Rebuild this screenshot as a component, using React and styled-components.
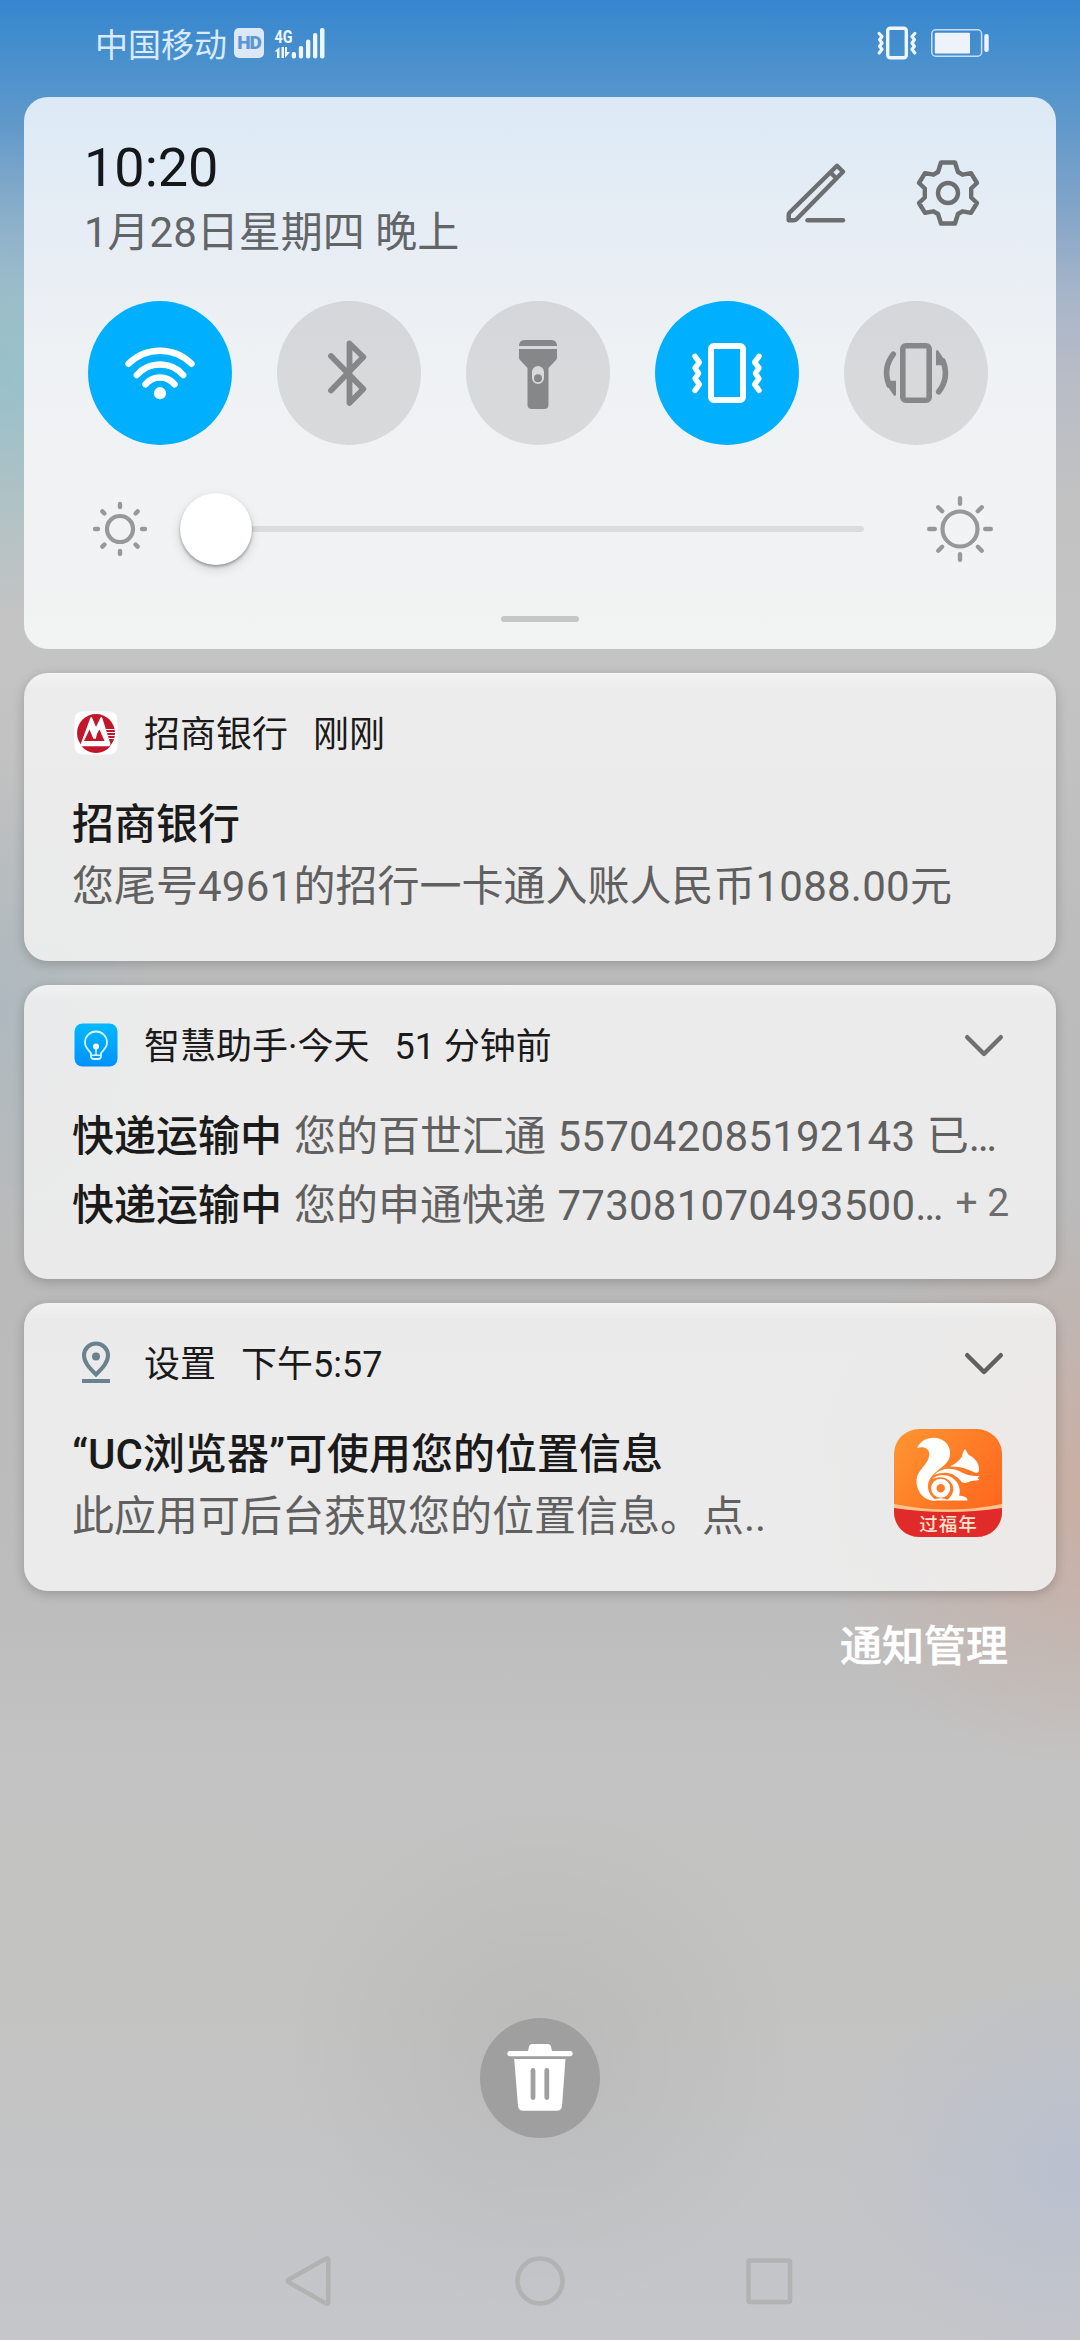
import React from 'react'
import styled, { createGlobalStyle } from 'styled-components'

const toggles = [
  { id: 'wifi', active: true },
  { id: 'bluetooth', active: false },
  { id: 'torch', active: false },
  { id: 'vibrate', active: true },
  { id: 'rotate', active: false },
]

const parcels = [
  { title: '快递运输中', company: '您的百世汇通', number: '557042085192143', tail: ' 已…' },
  { title: '快递运输中', company: '您的申通快递', number: '773081070493500', tail: '…', more: '+ 2' },
]

const rays = [0, 45, 90, 135, 180, 225, 270, 315]

const zigzag = 'M40 55.3L44.4 61.3L40 67L43.6 72.3L40 77.7L44.4 83.3L40 89.3'

const ToggleIcon = ({ id }) => {
  switch (id) {
    case 'wifi':
      return (
        <svg viewBox='0 0 144 144' fill='none' stroke='#fff'>
          <g strokeWidth='6.4' strokeLinecap='round'>
            <path d='M40.5 62.8A44.5 44.5 0 0 1 103.5 62.8' />
            <path d='M48.8 74A31 31 0 0 1 95.2 74' />
            <path d='M57.4 83.4A19 19 0 0 1 86.6 83.4' />
          </g>
          <circle cx='72' cy='92.2' r='6.1' fill='#fff' stroke='none' />
        </svg>
      )
    case 'bluetooth':
      return (
        <svg viewBox='0 0 144 144' fill='none' stroke='#868788'>
          <path
            d='M54 55L86.3 88L72.5 102V42.5L86.3 56L54 89.5'
            strokeWidth='5.8'
            strokeLinecap='round'
            strokeLinejoin='round'
          />
        </svg>
      )
    case 'torch':
      return (
        <svg viewBox='0 0 144 144' fill='#868788'>
          <path d='M53 45C53 41 55.500 39 59 39H85C88.500 39 91 41 91 45Z' />
          <path
            fillRule='evenodd'
            d='M53 48H91V56.500C91 58 90.500 58.500 89.500 59.500L82.500 67V103.500Q82.500 108 78 108H66Q61.500 108 61.500 103.500V67L54.500 59.500C53.500 58.500 53 58 53 56.500ZM72 65A6 6 0 0 0 66 71V77A6 6 0 0 0 78 77V71A6 6 0 0 0 72 65Z'
          />
          <circle cx='72' cy='77.2' r='4' />
        </svg>
      )
    case 'vibrate':
      return (
        <svg viewBox='0 0 144 144' fill='none' stroke='#fff'>
          <rect x='56' y='45' width='32' height='54' rx='3' strokeWidth='6' />
          <g strokeWidth='5.4' strokeLinecap='round' strokeLinejoin='round'>
            <path d={zigzag} />
            <path d={zigzag} transform='translate(144 0) scale(-1 1)' />
          </g>
        </svg>
      )
    default:
      return (
        <svg viewBox='0 0 144 144' fill='none' stroke='#868788'>
          <rect x='58.8' y='44.8' width='26.4' height='54.4' rx='3' strokeWidth='5.6' />
          {[0, 180].map((deg) => (
            <g key={deg} transform={`rotate(${deg} 72 72)`}>
              <path d='M49.3 53.300Q38.500 67 45 84' strokeWidth='5.600' strokeLinecap='round' />
              <path
                d='M45 79.800H52V93.500Q51.500 96 49.500 94Q44.500 88 42.500 81Z'
                fill='#868788'
                stroke='none'
              />
            </g>
          ))}
        </svg>
      )
  }
}

const Sun = ({ size, r, from, to }) => (
  <svg width={size} height={size} viewBox='-36 -36 72 72' fill='none' stroke='#979899'>
    <circle r={r} strokeWidth='4.2' />
    {rays.map((deg) => (
      <path
        key={deg}
        d={`M0 ${-from}V${-to}`}
        transform={`rotate(${deg})`}
        strokeWidth='4.4'
        strokeLinecap='round'
      />
    ))}
  </svg>
)

const EditIcon = () => (
  <svg width='60' height='60' viewBox='0 0 60 60' fill='none' stroke='#6c6f71' strokeWidth='4.4'>
    <path
      d='M51 2.800L57 8.800L10.500 56.200Q9.500 57.200 8 57.200H2.700V52Q2.700 50.500 3.700 49.500ZM44.500 9.500L50.500 15.500'
      strokeLinejoin='round'
    />
    <path d='M21.500 57.200H57' strokeLinecap='round' />
  </svg>
)

const GearIcon = () => (
  <svg width='68' height='68' viewBox='-34 -34 68 68' fill='none' stroke='#6c6f71' strokeWidth='4.400'>
    <path
      d='M-7 -30.500H7L10 -21L14.500 -18.300L23 -19.800L29 -10L23.200 -4.500V4.500L29 10L23 19.800L14.500 18.300L10 21L7 30.500H-7L-10 21L-14.500 18.300L-23 19.800L-29 10L-23.200 4.500V-4.500L-29 -10L-23 -19.800L-14.500 -18.300L-10 -21Z'
      strokeLinejoin='round'
    />
    <circle r='10' />
  </svg>
)

const SignalIcon = () => (
  <svg width='52' height='44' viewBox='0 -6 52 44' fill='#eef6ff'>
    <text
      x='0.500'
      y='15.500'
      fontFamily='Roboto, sans-serif'
      fontSize='19'
      fontWeight='700'
      textLength='18'
      lengthAdjust='spacingAndGlyphs'
    >
      4G
    </text>
    <path d='M5.500 20V31H3V24.500H0.500ZM7.500 20H10V31H7.500ZM11 20H13V25H16L11 31Z' />
    <rect x='17.700' y='25' width='4.300' height='6.500' rx='2' />
    <rect x='24.800' y='19' width='4.300' height='12.500' rx='2' />
    <rect x='32' y='12.500' width='4.300' height='19' rx='2' />
    <rect x='39' y='6' width='4.300' height='25.500' rx='2' />
    <rect x='46' y='1' width='4.500' height='30.500' rx='2' />
  </svg>
)

const StatusVibrate = () => (
  <svg width='40' height='34' viewBox='0 0 40 34' fill='none' stroke='#eef6ff'>
    <rect x='10.700' y='2.200' width='18.600' height='29.600' rx='2.500' strokeWidth='3.400' />
    <g strokeWidth='3.200' strokeLinecap='round' strokeLinejoin='round'>
      <path d='M2.200 7.500L5 10.500L2.600 13.800L5 17L2.600 20.200L5 23.300L2.200 27' />
      <path d='M37.800 7.500L35 10.500L37.400 13.800L35 17L37.400 20.200L35 23.300L37.800 27' />
    </g>
  </svg>
)

const BatteryIcon = () => (
  <svg width='58' height='28' viewBox='0 0 58 28' fill='#eef3fb'>
    <rect x='0.800' y='0.800' width='49.800' height='26.400' rx='4' fill='none' stroke='#c4e0fa' strokeWidth='1.500' />
    <rect x='3.800' y='3.800' width='35.200' height='20.600' rx='1' />
    <rect x='53.300' y='5' width='4.400' height='18' rx='2' />
  </svg>
)

const BankIcon = () => (
  <svg width='44' height='44' viewBox='0 0 44 44'>
    <rect x='0.500' y='0.500' width='43' height='43' rx='8' fill='#fff' />
    <circle cx='22' cy='22' r='19' fill='#c1172d' />
    <path d='M6 35L16.300 7Q17.200 5 18.200 7L22 16L26.300 7Q27.400 5 28.300 7L36.500 33L35 36H8Z' fill='#fff' />
    <path d='M17.500 10.500L20.800 19L17 26ZM27.400 10.500L30 19L26 26Z' fill='#fff' />
    <path d='M10 30L15.500 18.500L19.500 28L25.500 18.500L30.500 30Z' fill='#c1172d' />
    <path d='M18.200 9.800L21.800 19.500L20 23.500L21 27.500L23 19.500L27 9.800' fill='none' stroke='#fff' strokeWidth='1.600' />
    <path d='M7.500 35.300A19 19 0 0 0 36.500 35.300Z' fill='#c1172d' />
    <path d='M32 18.500H40.700M33 21.500H41M34 24.500H40.700M35 27.500H40' stroke='#fff' strokeWidth='1.200' />
  </svg>
)

const AssistantIcon = () => (
  <svg width='44' height='44' viewBox='0 0 44 44' fill='none' stroke='#d6f8ff'>
    <defs>
      <linearGradient id='assistant' x1='0' y1='0' x2='0' y2='1'>
        <stop offset='0' stopColor='#00b9ff' />
        <stop offset='1' stopColor='#0091ff' />
      </linearGradient>
    </defs>
    <rect x='0.500' y='0.500' width='43' height='43' rx='8' fill='url(#assistant)' stroke='none' />
    <path
      d='M17 33V30.500C17 28.500 11 26 11 19.500A11 11 0 0 1 33 19.500C33 26 27 28.500 27 30.500V33Q27 36 24 36H20Q17 36 17 33Z'
      strokeWidth='1.800'
    />
    <path d='M22 24V31.500M18 32.200H26' strokeWidth='1.500' />
    <circle cx='22' cy='23.500' r='3' fill='#fff' stroke='none' />
  </svg>
)

const LocationIcon = () => (
  <svg width='44' height='44' viewBox='0 0 44 44' fill='none' stroke='#69828e' strokeWidth='4'>
    <path d='M22 33.500C15 26.500 10 21 10 14.500A12 12 0 0 1 34 14.500C34 21 29 26.500 22 33.500Z' />
    <circle cx='22' cy='15.500' r='4' fill='#69828e' stroke='none' />
    <path d='M8 40H36' />
  </svg>
)

const SquirrelIcon = () => (
  <svg width='108' height='108' viewBox='0 0 108 108'>
    <defs>
      <linearGradient id='orange' x1='0' y1='0' x2='1' y2='0.800'>
        <stop offset='0' stopColor='#ff9631' />
        <stop offset='1' stopColor='#ff641d' />
      </linearGradient>
      <clipPath id='rounded'>
        <rect width='108' height='108' rx='25' />
      </clipPath>
    </defs>
    <g clipPath='url(#rounded)'>
      <rect width='108' height='108' fill='url(#orange)' />
      <path d='M0 75Q54 86 108 75V108H0Z' fill='#ffc48c' />
      <path d='M0 79Q54 87 108 79V108H0Z' fill='#e12a2a' />
    </g>
    <g fill='#fff'>
      <path d='M23 19C27 10 37 7 45 9.500C55 12.500 58.500 23 54.500 31C50 39 38 43 34.500 53C32.500 61 36 67 42.500 71.500C30 73 22 62 22.500 51C23 41 34.500 35.500 35.300 26C35.500 19.500 30 17 23 19Z' />
      <path d='M56 37.500C61 35 66 31 68 27.500C68.500 24.500 69.500 22 71 20C72.500 22 73.500 24.500 74.800 26C80 28 85 34 85 39.500C85.300 43 84 44.300 81.500 43.700C73 40 66 37 56 37.500Z' />
      <path d='M40 46C48 38.500 58 38.500 66 42.500C72 46 78 47.500 85.500 47L83.500 49L85.500 51C81 52 77 51.500 74 53.300C70.500 54.500 67.500 54 66.500 51.500C59 43.500 51 42 40 46Z' />
      <path d='M38 50C46 43 58 45.500 63.500 54C66.500 60 66 64 65 66.500L70 67.500C72.500 68.200 73.500 69.500 73.500 71.500H52.500C59 67 61.500 59 57 53.500C52.500 48 46 47 38 50Z' />
      <path
        fillRule='evenodd'
        d='M46.700 49.700A9.500 9.500 0 1 0 46.700 68.700A9.500 9.500 0 1 0 46.700 49.700ZM46.700 55A4.200 4.200 0 1 1 46.700 63.400A4.200 4.200 0 1 1 46.700 55Z'
      />
      <path d='M38 71.500Q46.500 67 55 71.500Z' />
    </g>
    <text
      x='54.500'
      y='101.500'
      textAnchor='middle'
      fontFamily='"Noto Sans CJK SC", sans-serif'
      fontSize='18.500'
      fontWeight='500'
      letterSpacing='1'
      fill='#ffe3cd'
    >
      过福年
    </text>
  </svg>
)

const Chevron = ({ color }) => (
  <svg width='40' height='24' viewBox='0 0 40 24' fill='none' stroke={color} strokeWidth='4.400'>
    <path d='M3.200 3.200L20 20L36.800 3.200' strokeLinecap='round' strokeLinejoin='round' />
  </svg>
)

const TrashIcon = () => (
  <svg width='120' height='120' viewBox='0 0 120 120' fill='#fff'>
    <path d='M48 33L49 28.500Q49.500 26 52 26H68Q70.500 26 71 28.500L72 33H90Q92.700 33 92.700 35.500T90 38.200H30Q27.300 38.200 27.300 35.500T30 33Z' />
    <path d='M34.200 41H85.500L82 88Q81.500 92.800 77 92.800H43Q38.500 92.800 38 88Z' />
    <path d='M53 52.500V79.500M66.800 52.500V79.500' stroke='#9f9f9f' strokeWidth='4.800' strokeLinecap='round' />
  </svg>
)

const App = () => {
  return (
    <>
      <GlobalStyle />
      <Screen>
        <StatusBar>
          <Carrier>中国移动</Carrier>
          <HdBadge>HD</HdBadge>
          <SignalIcon />
          <StatusRight>
            <StatusVibrate />
            <BatteryIcon />
          </StatusRight>
        </StatusBar>

        <Panel>
          <PanelHeader>
            <div>
              <Time>10:20</Time>
              <DateLine>1月28日星期四 晚上</DateLine>
            </div>
            <PanelActions>
              <EditIcon />
              <GearIcon />
            </PanelActions>
          </PanelHeader>
          <ToggleRow>
            {toggles.map((item) => (
              <Toggle key={item.id} $active={item.active}>
                <ToggleIcon id={item.id} />
              </Toggle>
            ))}
          </ToggleRow>
          <Brightness>
            <Sun size={72} r={13} from={22} to={25} />
            <Track>
              <Thumb />
            </Track>
            <Sun size={72} r={17.5} from={25.2} to={30.8} />
          </Brightness>
          <Handle />
        </Panel>

        <Cards>
          <Card $height={288}>
            <CardHeader>
              <BankIcon />
              <AppName>招商银行</AppName>
              <HeaderTime>刚刚</HeaderTime>
            </CardHeader>
            <CardBody>
              <Title>招商银行</Title>
              <Text>
                您尾号<Digits>4961</Digits>的招行一卡通入账人民币<Digits>1088.00</Digits>元
              </Text>
            </CardBody>
          </Card>

          <Card $height={294}>
            <CardHeader>
              <AssistantIcon />
              <AppName>智慧助手·今天</AppName>
              <HeaderTime>51 分钟前</HeaderTime>
              <Expand>
                <Chevron color='#6f6f6f' />
              </Expand>
            </CardHeader>
            <Parcels>
              {parcels.map((item, index) => (
                <Parcel key={index}>
                  <strong>{item.title}</strong>
                  <span>
                    {item.company} <Digits>{item.number}</Digits>
                    {item.tail}
                  </span>
                  {item.more && <More>{item.more}</More>}
                </Parcel>
              ))}
            </Parcels>
          </Card>

          <Card $height={288}>
            <CardHeader>
              <LocationIcon />
              <AppName>设置</AppName>
              <HeaderTime>下午5:57</HeaderTime>
              <Expand>
                <Chevron color='#5f5f5f' />
              </Expand>
            </CardHeader>
            <CardSplit>
              <CardBody>
                <Title>“UC浏览器”可使用您的位置信息</Title>
                <Text>此应用可后台获取您的位置信息。点..</Text>
              </CardBody>
              <SquirrelIcon />
            </CardSplit>
          </Card>
        </Cards>

        <Manage>通知管理</Manage>

        <ClearButton>
          <TrashIcon />
        </ClearButton>

        <NavBar>
          <svg viewBox='0 0 60 60'>
            <path d='M9.500 28.800L47 7.500Q49.300 6.500 49.300 9V51Q49.300 53.500 47 52.500L9.500 31.200Q8 30 9.500 28.800Z' />
          </svg>
          <svg viewBox='0 0 60 60'>
            <circle cx='30' cy='30' r='22.500' />
          </svg>
          <svg viewBox='0 0 60 60'>
            <rect x='7.500' y='9.500' width='41.500' height='41.500' rx='1.500' />
          </svg>
        </NavBar>
      </Screen>
    </>
  )
}

const GlobalStyle = createGlobalStyle`
  body {
    margin: 0;
  }
  svg {
    display: block;
    flex: none;
  }
`

const Screen = styled.main`
  width: 1080px;
  height: 2340px;
  box-sizing: border-box;
  display: flex;
  flex-direction: column;
  overflow: hidden;
  font-family: Roboto, 'Noto Sans CJK SC', sans-serif;
  color: #1a1a1a;
  background:
    radial-gradient(circle at 540px 2060px, rgba(0, 0, 0, 0.035) 60px, transparent 260px),
    radial-gradient(ellipse 240px 200px at 1080px 2170px, rgba(180, 190, 212, 0.65), transparent),
    radial-gradient(ellipse 280px 280px at 1090px 1490px, rgba(208, 168, 152, 0.7), transparent),
    radial-gradient(ellipse 160px 240px at 0 1010px, rgba(168, 184, 192, 0.7), transparent),
    radial-gradient(ellipse 200px 240px at 0 370px, rgba(146, 194, 202, 0.85), transparent),
    linear-gradient(
      #3686cf 0,
      #4990cd 60px,
      #5b97cb 110px,
      #7fa3c9 200px,
      #a9b6c9 300px,
      #b8bcc6 380px,
      #c2c2c2 500px,
      #c4c4c4 660px,
      #bcbcbc 970px,
      #bababa 1290px,
      #bdbdbd 1620px,
      #c3c3c3 1760px,
      #c3c3c2 2000px,
      #c5c6ca 2340px
    );
`

const StatusBar = styled.header`
  height: 97px;
  box-sizing: border-box;
  padding: 0 91px 11px 95px;
  display: flex;
  align-items: center;
`

const Carrier = styled.span`
  margin-top: 6px;
  font-size: 33px;
  line-height: 40px;
  color: #d8eafc;
`

const HdBadge = styled.span`
  width: 30px;
  height: 30px;
  margin: 0 10px 0 7px;
  border-radius: 5px;
  background: #dce8f6;
  color: #5b97d2;
  font-size: 19px;
  font-weight: 900;
  line-height: 30px;
  text-align: center;
  letter-spacing: -1px;
`

const StatusRight = styled.div`
  margin-left: auto;
  display: flex;
  align-items: center;
  gap: 14px;
`

const Panel = styled.section`
  height: 552px;
  margin: 0 24px;
  padding: 39px 64px 0;
  box-sizing: border-box;
  border-radius: 24px;
  background: linear-gradient(#dceaf6 0, #e3ecf5 90px, #e9eef4 170px, #eff2f4 270px, #f2f3f3 552px);
`

const PanelHeader = styled.div`
  height: 165px;
  display: flex;
  justify-content: space-between;
`

const Time = styled.div`
  margin-left: -4px;
  font-size: 54px;
  line-height: 64px;
  color: #14181a;
`

const DateLine = styled.div`
  margin: 5px 0 0 -4px;
  font-size: 42px;
  line-height: 56px;
  color: #626567;
`

const PanelActions = styled.div`
  height: 68px;
  margin: 23px 10px 0 0;
  display: flex;
  align-items: center;
  gap: 68px;
`

const ToggleRow = styled.div`
  width: 900px;
  display: flex;
  justify-content: space-between;
`

const Toggle = styled.div`
  width: 144px;
  height: 144px;
  border-radius: 50%;
  background: ${(props) => (props.$active ? '#00b0ff' : 'rgba(8, 4, 0, 0.1)')};
`

const Brightness = styled.div`
  height: 72px;
  margin: 48px -8px 0 -4px;
  display: flex;
  align-items: center;
`

const Track = styled.div`
  width: 684px;
  height: 6px;
  margin: 0 60px 0 24px;
  border-radius: 3px;
  background: #dadcde;
  display: flex;
  align-items: center;
`

const Thumb = styled.div`
  width: 72px;
  height: 72px;
  border-radius: 50%;
  background: #fff;
  box-shadow: 0 2px 3px rgba(0, 0, 0, 0.3), 0 4px 12px rgba(0, 0, 0, 0.14);
`

const Handle = styled.div`
  width: 78px;
  height: 6px;
  margin: 51px auto 0;
  border-radius: 3px;
  background: #c5c7c7;
`

const Cards = styled.section`
  margin: 24px 24px 0;
  display: flex;
  flex-direction: column;
  gap: 24px;
`

const Card = styled.article`
  height: ${(props) => props.$height}px;
  box-sizing: border-box;
  padding: 38px 48px 0;
  border-radius: 24px;
  background: linear-gradient(rgba(255, 255, 255, 0.35), transparent 16px), rgba(242, 242, 242, 0.86);
  box-shadow: 0 3px 12px rgba(0, 0, 0, 0.2);
`

const CardHeader = styled.div`
  height: 44px;
  padding-left: 2px;
  display: flex;
  align-items: center;
  font-size: 36px;
  line-height: 44px;
`

const AppName = styled.span`
  margin: 4px 25px 0 26px;
`

const HeaderTime = styled.span`
  margin-top: 4px;
`

const Expand = styled.div`
  margin: 2px 4px 0 auto;
`

const CardBody = styled.div`
  flex: 1;
  padding-top: 42px;
  white-space: nowrap;
`

const CardSplit = styled.div`
  display: flex;
  align-items: flex-end;
  padding-right: 6px;

  > svg {
    margin-bottom: 8px;
  }
`

const Title = styled.div`
  font-size: 42px;
  font-weight: 500;
  line-height: 56px;
`

const Text = styled.div`
  margin-top: 6px;
  font-size: 42px;
  line-height: 56px;
  color: #606060;
`

const Digits = styled.span`
  letter-spacing: 0.25px;
`

const Parcels = styled.div`
  padding-top: 35px;
`

const Parcel = styled.div`
  display: flex;
  gap: 12px;
  white-space: nowrap;
  font-size: 42px;
  line-height: 69px;
  word-spacing: 1px;
  color: #606060;

  strong {
    font-weight: 500;
    color: #1a1a1a;
  }
`

const More = styled.span`
  margin-left: auto;
  font-size: 39px;
  line-height: 65px;
  word-spacing: 0;
  color: #6e6e6e;
`

const Manage = styled.div`
  margin: 28px 72px 0 auto;
  font-size: 42px;
  font-weight: 500;
  line-height: 56px;
  color: #fff;
  -webkit-text-stroke: 0.5px #fff;
`

const ClearButton = styled.div`
  width: 120px;
  height: 120px;
  margin: auto auto 113px;
  border-radius: 50%;
  background: #9f9f9f;
`

const NavBar = styled.nav`
  display: flex;
  justify-content: center;
  gap: 171px;
  margin-bottom: 29px;

  svg {
    width: 60px;
    height: 60px;
    fill: none;
    stroke: #b2b2b3;
    stroke-width: 4.6;
  }
`

export default App
